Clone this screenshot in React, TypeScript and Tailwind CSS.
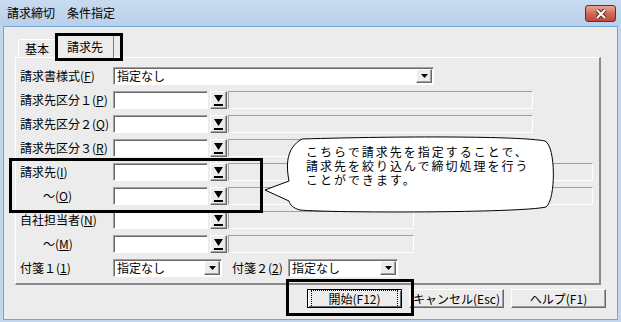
import type { ReactNode } from "react"

function Sunken({ className, children }: { className: string; children?: ReactNode }) {
  return (
    <div
      className={`h-[18px] bg-white border border-t-[#a0a0a0] border-l-[#a0a0a0] border-r-white border-b-white shadow-[inset_1px_1px_0_#696969] flex items-center ${className}`}
    >
      {children}
    </div>
  )
}

function BrowseButton() {
  return (
    <div className="ml-[2px] w-[17px] h-[18px] bg-[#ececec] border border-t-white border-l-white border-r-[#696969] border-b-[#696969] shadow-[inset_-1px_-1px_0_#a0a0a0] flex items-center justify-center">
      <svg width="9" height="11" viewBox="0 0 9 11">
        <path d="M0 0H9L4.5 7Z" fill="#000" />
        <rect x="0" y="9" width="9" height="2" fill="#000" />
      </svg>
    </div>
  )
}

function GrayField({ className }: { className: string }) {
  return (
    <div className={`ml-[1px] h-[18px] border border-t-[#a0a0a0] border-l-[#a0a0a0] border-r-white border-b-white ${className}`} />
  )
}

function Combo({ className, value }: { className: string; value: string }) {
  return (
    <Sunken className={className}>
      <span className="flex-1 pl-[3px] text-[12px] leading-none">{value}</span>
      <div className="w-[16px] h-[14px] mr-[1px] bg-[#ececec] border border-t-white border-l-white border-r-[#696969] border-b-[#696969] shadow-[inset_-1px_-1px_0_#a0a0a0] flex items-center justify-center">
        <svg width="7" height="4" viewBox="0 0 7 4">
          <path d="M0 0H7L3.5 4Z" fill="#000" />
        </svg>
      </div>
    </Sunken>
  )
}

function Label({ children, indent }: { children: ReactNode; indent?: boolean }) {
  return (
    <div className={`w-[93px] text-[12px] leading-none whitespace-nowrap ${indent ? "pl-[23px]" : ""}`}>
      {children}
    </div>
  )
}

function LookupRow({ label, gray, indent }: { label: ReactNode; gray: string; indent?: boolean }) {
  return (
    <div className="h-[24px] flex items-center">
      <Label indent={indent}>{label}</Label>
      <Sunken className="w-[95px]" />
      <BrowseButton />
      <GrayField className={gray} />
    </div>
  )
}

function Button({ children, focused }: { children: ReactNode; focused?: boolean }) {
  return (
    <div
      className={`w-[95px] h-[19px] bg-[#ececec] border flex items-center justify-center text-[12px] leading-none ${
        focused
          ? "border-black shadow-[inset_1px_1px_0_#fff,inset_-1px_-1px_0_#696969]"
          : "border-t-white border-l-white border-r-[#696969] border-b-[#696969] shadow-[inset_-1px_-1px_0_#a0a0a0]"
      }`}
    >
      {focused ? (
        <span className="border border-dotted border-black px-[16px] py-[2px]">{children}</span>
      ) : (
        children
      )}
    </div>
  )
}

export default function App() {
  return (
    <div className="relative w-[621px] h-[322px] overflow-hidden bg-[#c2d6ed] flex flex-col text-black [font-family:'Noto_Sans_CJK_JP',sans-serif]">
      {/* title bar */}
      <div className="h-[26px] shrink-0 flex justify-between bg-gradient-to-b from-[#c9dbf0] to-[#b9cfea] pl-[7px] pr-[5px]">
        <span className="self-center text-[12px] leading-none">請求締切　条件指定</span>
        <div className="mt-[5px] w-[31px] h-[17px] rounded-[3px] border border-[#6b2a22] bg-gradient-to-b from-[#e8a59a] via-[#d26a56] to-[#c0463a] flex items-center justify-center">
          <svg width="12" height="10" viewBox="0 0 12 10">
            <path d="M2 1L10 9M10 1L2 9" stroke="#5a2a24" strokeWidth="4" />
            <path d="M2 1L10 9M10 1L2 9" stroke="#fff" strokeWidth="2" />
          </svg>
        </div>
      </div>

      {/* body */}
      <div className="flex-1 mx-[3px] mb-[2px] bg-[#ececec] border border-[#6fa8d6] flex flex-col pl-[11px]">
        {/* tabs */}
        <div className="h-[30px] flex items-end pl-[3px]">
          <div className="w-[38px] h-[18px] border-t border-l border-r border-t-white border-l-white border-r-[#808080] rounded-t-[2px] flex items-center justify-center text-[12px] leading-none">
            基本
          </div>
          <div className="relative z-10 -mb-[1px] w-[58px] h-[23px] bg-[#ececec] border-t border-l border-r border-t-white border-l-white border-r-[#808080] rounded-t-[2px] flex items-center justify-center text-[12px] leading-none pb-[1px]">
            請求先
          </div>
        </div>

        {/* panel */}
        <div className="w-[586px] h-[228px] border-t border-l border-t-white border-l-white border-r-2 border-b-2 border-r-[#8a8a8a] border-b-[#8a8a8a] pt-[6px] pl-[4px]">
          <div className="h-[24px] flex items-center">
            <Label>
              請求書様式(<span className="underline">F</span>)
            </Label>
            <Combo className="w-[321px]" value="指定なし" />
          </div>
          <LookupRow label={<>請求先区分１(<span className="underline">P</span>)</>} gray="w-[305px]" />
          <LookupRow label={<>請求先区分２(<span className="underline">Q</span>)</>} gray="w-[305px]" />
          <LookupRow label={<>請求先区分３(<span className="underline">R</span>)</>} gray="w-[305px]" />
          <LookupRow label={<>請求先(<span className="underline">I</span>)</>} gray="w-[365px]" />
          <LookupRow label={<>～(<span className="underline">O</span>)</>} gray="w-[365px]" indent />
          <LookupRow label={<>自社担当者(<span className="underline">N</span>)</>} gray="w-[186px]" />
          <LookupRow label={<>～(<span className="underline">M</span>)</>} gray="w-[186px]" indent />
          <div className="h-[24px] flex items-center">
            <Label>
              付箋１(<span className="underline">1</span>)
            </Label>
            <Combo className="w-[109px]" value="指定なし" />
            <span className="ml-[10px] w-[56px] text-[12px] leading-none whitespace-nowrap">
              付箋２(<span className="underline">2</span>)
            </span>
            <Combo className="w-[110px]" value="指定なし" />
          </div>
        </div>

        {/* buttons */}
        <div className="mt-[4px] flex justify-end gap-[7px] pr-[11px]">
          <Button focused>開始(F12)</Button>
          <Button>キャンセル(Esc)</Button>
          <Button>ヘルプ(F1)</Button>
        </div>
      </div>

      {/* annotation overlays */}
      <div className="absolute left-[55px] top-[33px] w-[68px] h-[28px] border-[3px] border-black z-20" />
      <div className="absolute left-[9px] top-[158px] w-[254px] h-[55px] border-[3px] border-black z-20" />
      <div className="absolute left-[286px] top-[279px] w-[128px] h-[37px] border-[3px] border-black z-20" />

      <svg className="absolute left-0 top-0 z-20 pointer-events-none" width="621" height="322" viewBox="0 0 621 322">
        <path
          d="M302 139 C400 136 520 136 545 141 C556 146 556 200 546 207 C520 213 330 213 300 210 C293 208 290 205 289 201 L265 190 L289 181 C286 165 286 148 302 139 Z"
          fill="#fff"
          stroke="#000"
          strokeWidth="1"
        />
      </svg>
      <div className="absolute left-[306px] top-[145px] z-30 text-[12px] leading-[14px] tracking-[2px] whitespace-nowrap">
        <div>こちらで請求先を指定することで、</div>
        <div>請求先を絞り込んで締切処理を行う</div>
        <div>ことができます。</div>
      </div>
    </div>
  )
}
